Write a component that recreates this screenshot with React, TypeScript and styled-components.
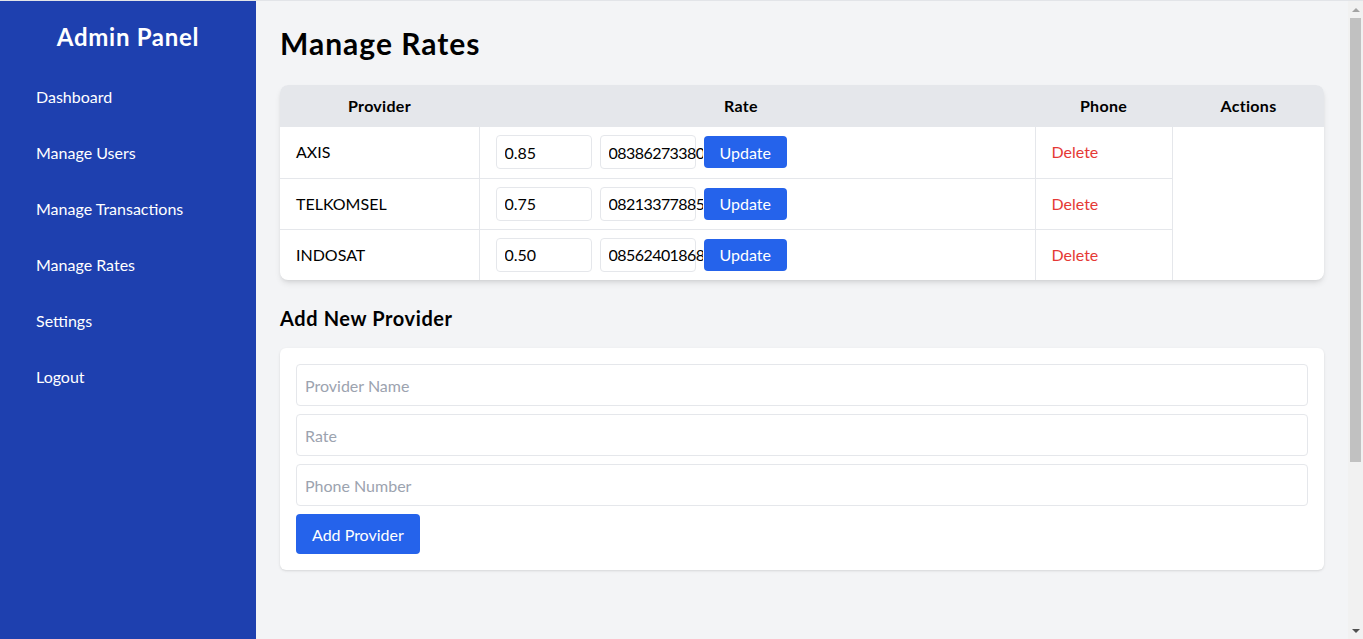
import React from "react";
import styled, { createGlobalStyle } from "styled-components";

const GlobalStyle = createGlobalStyle`
  * { box-sizing: border-box; }
  html, body { margin: 0; padding: 0; height: 100%; overflow: hidden; }
  body {
    font-family: Lato, "Liberation Sans", sans-serif;
    font-size: 16px;
    line-height: 24px;
    color: #000;
    background: #f3f4f6;
  }
`;

const Shell = styled.div`
  display: flex;
  height: 100vh;
  border-top: 1px solid #e2e4e8;
`;

const Viewport = styled.div`
  flex: 1;
  min-width: 0;
  overflow: hidden;
`;

const ScrollBar = styled.div`
  width: 15px;
  flex-shrink: 0;
  background: #f1f1f1;
  display: flex;
  flex-direction: column;
`;

const ArrowButton = styled.div<{ $dir: "up" | "down"; $color: string }>`
  height: 17px;
  flex-shrink: 0;
  display: flex;
  align-items: center;
  justify-content: center;
  &::after {
    content: "";
    width: 0;
    height: 0;
    border-left: 4px solid transparent;
    border-right: 4px solid transparent;
    ${(p) =>
      p.$dir === "up"
        ? `border-bottom: 4px solid ${p.$color};`
        : `border-top: 4px solid ${p.$color};`}
  }
`;

const Track = styled.div`
  flex: 1;
  padding: 0 2px;
`;

const Thumb = styled.div`
  height: 444px;
  background: #c1c1c1;
`;

const Layout = styled.div`
  display: flex;
  min-height: 872px;
`;

const Sidebar = styled.aside`
  width: 256px;
  flex-shrink: 0;
  background: #1e40af;
  color: #fff;
  padding: 20px;
  display: flex;
  flex-direction: column;
`;

const Brand = styled.h2`
  margin: 0 0 24px;
  font-size: 24px;
  line-height: 32px;
  font-weight: 700;
  letter-spacing: 0.7px;
  text-align: center;
`;

const Nav = styled.nav`
  display: flex;
  flex-direction: column;
  gap: 16px;
`;

const NavLink = styled.a`
  display: block;
  padding: 8px 16px;
  color: #fff;
  text-decoration: none;
  font-size: 16px;
  line-height: 24px;
`;

const Main = styled.main`
  flex: 1;
  padding: 24px;
  min-width: 0;
`;

const Title = styled.h1`
  margin: 0 0 24px;
  font-size: 30px;
  line-height: 36px;
  font-weight: 700;
  letter-spacing: 1px;
`;

const TableCard = styled.div`
  background: #fff;
  border-radius: 8px;
  overflow: hidden;
  box-shadow: 0 4px 6px -1px rgba(0, 0, 0, 0.1), 0 2px 4px -2px rgba(0, 0, 0, 0.1);
`;

const Table = styled.table`
  width: 100%;
  border-collapse: collapse;
  table-layout: fixed;
`;

const HeadRow = styled.tr`
  background: #e5e7eb;
`;

const Th = styled.th<{ $w: number; $shift?: number }>`
  width: ${(p) => p.$w}px;
  height: 42px;
  padding: 0 ${(p) => 16 + (p.$shift || 0)}px 0 16px;
  font-size: 16px;
  font-weight: 700;
  letter-spacing: 0.3px;
  text-align: center;
`;

const Td = styled.td`
  border: 1px solid #e5e7eb;
  border-top: none;
  padding: 8px 16px;
  height: 51px;
  font-size: 16px;
  white-space: nowrap;
  &:first-child { border-left: none; }
`;

const LastRow = styled.tr`
  & > td { border-bottom: none; }
`;

const RowControls = styled.div`
  display: flex;
  gap: 8px;
  align-items: center;
`;

const SmallInput = styled.input`
  width: 96px;
  height: 34px;
  padding: 4px 8px;
  border: 1px solid #e5e7eb;
  border-radius: 4px;
  font-family: inherit;
  font-size: 16px;
  color: #000;
  background: #fff;
  outline: none;
`;

const PhoneBox = styled.div`
  width: 96px;
  height: 34px;
  flex-shrink: 0;
  border: 1px solid #e5e7eb;
  border-radius: 4px;
  display: flex;
  align-items: center;
  overflow: visible;
`;

const PhoneInput = styled.input`
  width: 102px;
  flex-shrink: 0;
  height: 32px;
  padding: 4px 0 4px 8px;
  border: none;
  background: transparent;
  font-family: inherit;
  font-size: 16px;
  letter-spacing: -0.55px;
  color: #000;
  outline: none;
`;

const Button = styled.button<{ $h: number }>`
  position: relative;
  height: ${(p) => p.$h}px;
  padding: 0 16px;
  background: #2563eb;
  color: #fff;
  border: none;
  border-radius: 4px;
  font-family: inherit;
  font-size: 16px;
  cursor: pointer;
`;

const DeleteLink = styled.button`
  background: none;
  border: none;
  padding: 0;
  color: #e53935;
  font-family: inherit;
  font-size: 16px;
  cursor: pointer;
`;

const SectionTitle = styled.h2`
  margin: 24px 0 16px;
  font-size: 20px;
  line-height: 28px;
  font-weight: 700;
  letter-spacing: 0.6px;
`;

const FormCard = styled.form`
  background: #fff;
  border-radius: 6px;
  padding: 16px;
  display: flex;
  flex-direction: column;
  align-items: flex-start;
  gap: 8px;
  box-shadow: 0 1px 3px 0 rgba(0, 0, 0, 0.1), 0 1px 2px -1px rgba(0, 0, 0, 0.1);
`;

const FieldInput = styled.input`
  width: 100%;
  height: 42px;
  padding: 8px;
  border: 1px solid #e5e7eb;
  border-radius: 4px;
  font-family: inherit;
  font-size: 16px;
  outline: none;
  &::placeholder { color: #9ca3af; }
`;

const rows = [
  { name: "AXIS", rate: "0.85", phone: "083862733801" },
  { name: "TELKOMSEL", rate: "0.75", phone: "082133778851" },
  { name: "INDOSAT", rate: "0.50", phone: "085624018681" },
];

const navItems = ["Dashboard", "Manage Users", "Manage Transactions", "Manage Rates", "Settings", "Logout"];

export default function App() {
  return (
    <>
      <GlobalStyle />
      <Shell>
        <Viewport>
          <Layout>
            <Sidebar>
              <Brand>Admin Panel</Brand>
              <Nav>
                {navItems.map((n) => (
                  <NavLink key={n} href="#">{n}</NavLink>
                ))}
              </Nav>
            </Sidebar>
            <Main>
              <Title>Manage Rates</Title>
              <TableCard>
                <Table>
                  <thead>
                    <HeadRow>
                      <Th $w={199}>Provider</Th>
                      <Th $w={556} $shift={32}>Rate</Th>
                      <Th $w={137}>Phone</Th>
                      <Th $w={153}>Actions</Th>
                    </HeadRow>
                  </thead>
                  <tbody>
                    {rows.map((r, i) => {
                      const cells = (
                        <>
                          <Td>{r.name}</Td>
                          <Td>
                            <RowControls>
                              <SmallInput defaultValue={r.rate} />
                              <PhoneBox>
                                <PhoneInput defaultValue={r.phone} />
                              </PhoneBox>
                              <Button type="button" $h={32}>Update</Button>
                            </RowControls>
                          </Td>
                          <Td>
                            <DeleteLink type="button">Delete</DeleteLink>
                          </Td>
                        </>
                      );
                      return i === rows.length - 1 ? (
                        <LastRow key={r.name}>{cells}</LastRow>
                      ) : (
                        <tr key={r.name}>{cells}</tr>
                      );
                    })}
                  </tbody>
                </Table>
              </TableCard>
              <SectionTitle>Add New Provider</SectionTitle>
              <FormCard onSubmit={(e) => e.preventDefault()}>
                <FieldInput placeholder="Provider Name" />
                <FieldInput placeholder="Rate" />
                <FieldInput placeholder="Phone Number" />
                <Button type="submit" $h={40}>Add Provider</Button>
              </FormCard>
            </Main>
          </Layout>
        </Viewport>
        <ScrollBar aria-hidden="true">
          <ArrowButton $dir="up" $color="#a3a3a3" />
          <Track>
            <Thumb />
          </Track>
          <ArrowButton $dir="down" $color="#505050" />
        </ScrollBar>
      </Shell>
    </>
  );
}
